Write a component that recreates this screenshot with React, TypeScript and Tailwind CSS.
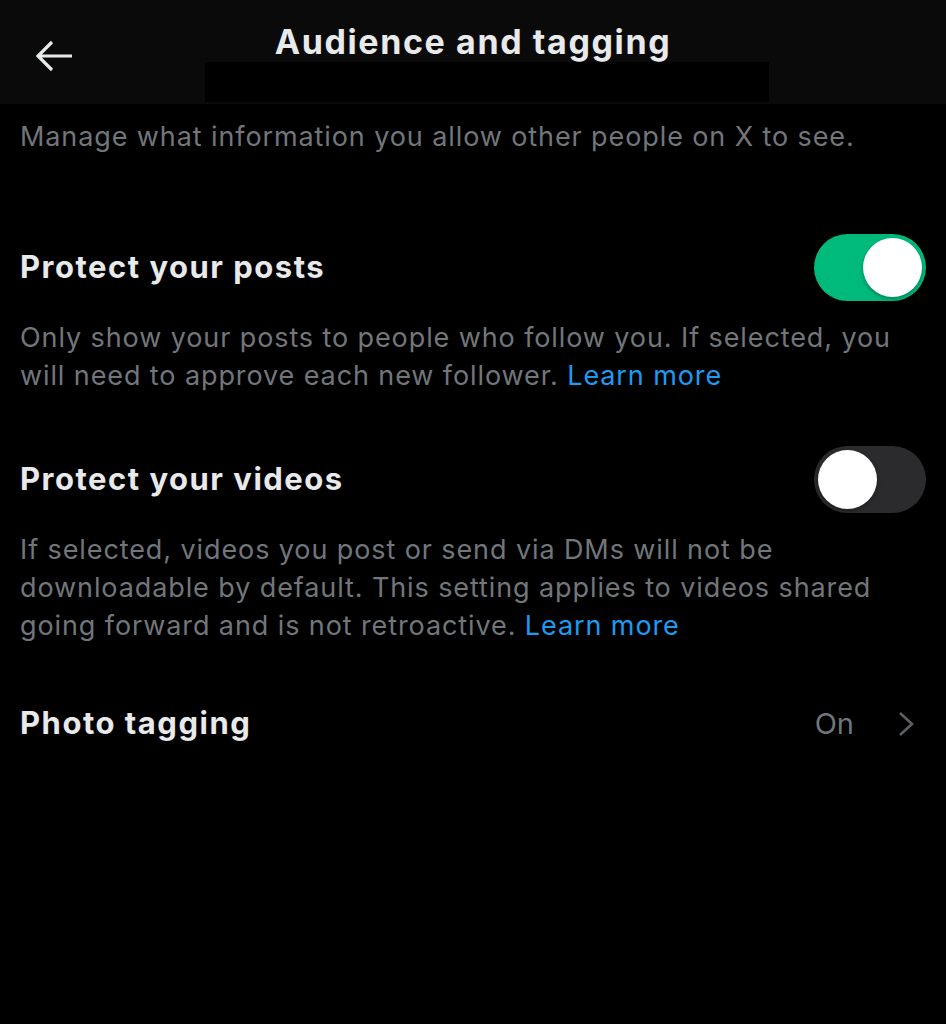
import { ReactNode } from 'react';

function Toggle({ on }: { on: boolean }) {
  return (
    <div
      className={
        on
          ? 'flex h-[67px] w-[112px] shrink-0 items-center justify-end rounded-full bg-[#00ba7c] px-[4px]'
          : 'flex h-[67px] w-[112px] shrink-0 items-center justify-start rounded-full bg-[#2b2b2d] px-[4px]'
      }
    >
      <div className="h-[59px] w-[59px] rounded-full bg-white shadow-[0_2px_4px_rgba(0,0,0,0.3)]" />
    </div>
  );
}

function SettingRow({ title, right }: { title: string; right: ReactNode }) {
  return (
    <div className="flex h-[67px] items-center justify-between pl-[20px] pr-[20px]">
      <span className="text-[31px] font-bold tracking-[1.5px] text-[#e7e9ea]">{title}</span>
      {right}
    </div>
  );
}

function Description({ children }: { children: ReactNode }) {
  return (
    <p className="px-[20px] text-[27px] leading-[38px] tracking-[0.9px] text-[#71767b]">
      {children}
    </p>
  );
}

export default function App() {
  return (
    <div
      className="min-h-[1024px] w-full bg-black"
      style={{ fontFamily: 'Inter, "Noto Sans", sans-serif' }}
    >
      <header className="relative flex h-[104px] flex-col items-center bg-[#0a0a0a]">
        <button className="absolute left-[35px] top-[40px] text-[#e7e9ea]">
          <svg width="38" height="32" viewBox="0 0 38 32" fill="none">
            <path
              d="M37 16H3M17 2L3 16l14 14"
              stroke="currentColor"
              strokeWidth="3.2"
              strokeLinecap="butt"
              strokeLinejoin="miter"
            />
          </svg>
        </button>
        <h1 className="mt-[22px] text-[34px] font-bold leading-[40px] tracking-[1.6px] text-[#e7e9ea]">
          Audience and tagging
        </h1>
        <div className="ml-[28px] h-[40px] w-[564px] bg-black" />
      </header>

      <div className="pt-[14px]">
        <Description>Manage what information you allow other people on X to see.</Description>
      </div>

      <div className="mt-[78px]">
        <SettingRow title="Protect your posts" right={<Toggle on />} />
      </div>
      <div className="mt-[18px]">
        <Description>
          Only show your posts to people who follow you. If selected, you will need to
          approve each new follower. <span className="text-[#1d9bf0]">Learn more</span>
        </Description>
      </div>

      <div className="mt-[51px]">
        <SettingRow title="Protect your videos" right={<Toggle on={false} />} />
      </div>
      <div className="mt-[18px]">
        <Description>
          If selected, videos you post or send via DMs will not be downloadable by default.
          This setting applies to videos shared going forward and is not retroactive.{' '}
          <span className="text-[#1d9bf0]">Learn more</span>
        </Description>
      </div>

      <div className="mt-[45px]">
        <SettingRow
          title="Photo tagging"
          right={
            <div className="flex items-center gap-[44px] pr-[12px]">
              <span className="text-[29px] text-[#71767b]">On</span>
              <svg width="16" height="26" viewBox="0 0 16 26" fill="none">
                <path d="M2 2l12 11L2 24" stroke="#5b5f63" strokeWidth="2.6" />
              </svg>
            </div>
          }
        />
      </div>
    </div>
  );
}
